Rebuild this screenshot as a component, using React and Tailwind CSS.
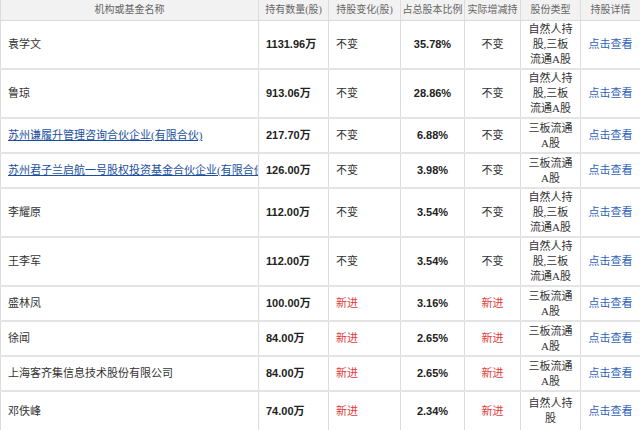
const rows = [
  ["袁学文", false, "1131.96万", "不变", "35.78%", "不变", "自然人持股,三板流通A股", 49],
  ["鲁琼", false, "913.06万", "不变", "28.86%", "不变", "自然人持股,三板流通A股", 49],
  ["苏州谦履升管理咨询合伙企业(有限合伙)", true, "217.70万", "不变", "6.88%", "不变", "三板流通A股", 35],
  ["苏州君子兰启航一号股权投资基金合伙企业(有限合伙)", true, "126.00万", "不变", "3.98%", "不变", "三板流通A股", 35],
  ["李耀原", false, "112.00万", "不变", "3.54%", "不变", "自然人持股,三板流通A股", 49],
  ["王李军", false, "112.00万", "不变", "3.54%", "不变", "自然人持股,三板流通A股", 49],
  ["盛林凤", false, "100.00万", "新进", "3.16%", "新进", "三板流通A股", 35],
  ["徐闻", false, "84.00万", "新进", "2.65%", "新进", "三板流通A股", 35],
  ["上海客齐集信息技术股份有限公司", false, "84.00万", "新进", "2.65%", "新进", "三板流通A股", 35],
  ["邓佚峰", false, "74.00万", "新进", "2.34%", "新进", "自然人持股", 40],
];
const heads = ["机构或基金名称", "持有数量(股)", "持股变化(股)", "占总股本比例", "实际增减持", "股份类型", "持股详情"];
const num = { fontFamily: '"Liberation Sans","Noto Sans CJK SC",sans-serif' };
export default function App() {
  const f = { fontFamily: '"Liberation Serif","Noto Sans CJK SC",serif' };
  return (
    <div className="w-[640px] h-[430px] overflow-hidden bg-white text-[11px] text-[#333]" style={f}>
      <table className="w-[640px] table-fixed border-collapse">
        <colgroup>
          {[258, 70, 72, 64, 56, 60, 60].map((w, i) => <col key={i} style={{ width: w }} />)}
        </colgroup>
        <thead>
          <tr className="h-[20px] bg-[#f2f2f2] text-[#666] text-[10px]">
            {heads.map((h) => (
              <th key={h} className="font-normal border border-[#dcdcdc] border-t-0 text-center p-0 whitespace-nowrap overflow-hidden">{h}</th>
            ))}
          </tr>
        </thead>
        <tbody>
          {rows.map((r, i) => {
            const red = r[3] === "新进";
            return (
              <tr key={i} style={{ height: r[7] }} className="border-b-2 border-[#e4e4e4]">
                <td className="border-x border-[#dcdcdc] pl-[7px] whitespace-nowrap overflow-hidden">
                  {r[1] ? <span className="text-[#1a4fa0] underline">{r[0]}</span> : r[0]}
                </td>
                <td className="border-x border-[#dcdcdc] pl-[7px] font-bold text-[#222] text-[11px] whitespace-nowrap" style={num}>{r[2]}</td>
                <td className={`border-x border-[#dcdcdc] pl-[7px] ${red ? "text-[#e03a3a]" : ""}`}>{r[3]}</td>
                <td className="border-x border-[#dcdcdc] text-center font-bold text-[#222] text-[11px]" style={num}>{r[4]}</td>
                <td className={`border-x border-[#dcdcdc] text-center ${red ? "text-[#e03a3a]" : ""}`}>{r[5]}</td>
                <td className="border-x border-[#dcdcdc] text-center leading-[15px] px-[7px] break-all">{r[6]}</td>
                <td className="border-x border-[#dcdcdc] text-center text-[#2f63b8] whitespace-nowrap">点击查看</td>
              </tr>
            );
          })}
        </tbody>
      </table>
    </div>
  );
}
